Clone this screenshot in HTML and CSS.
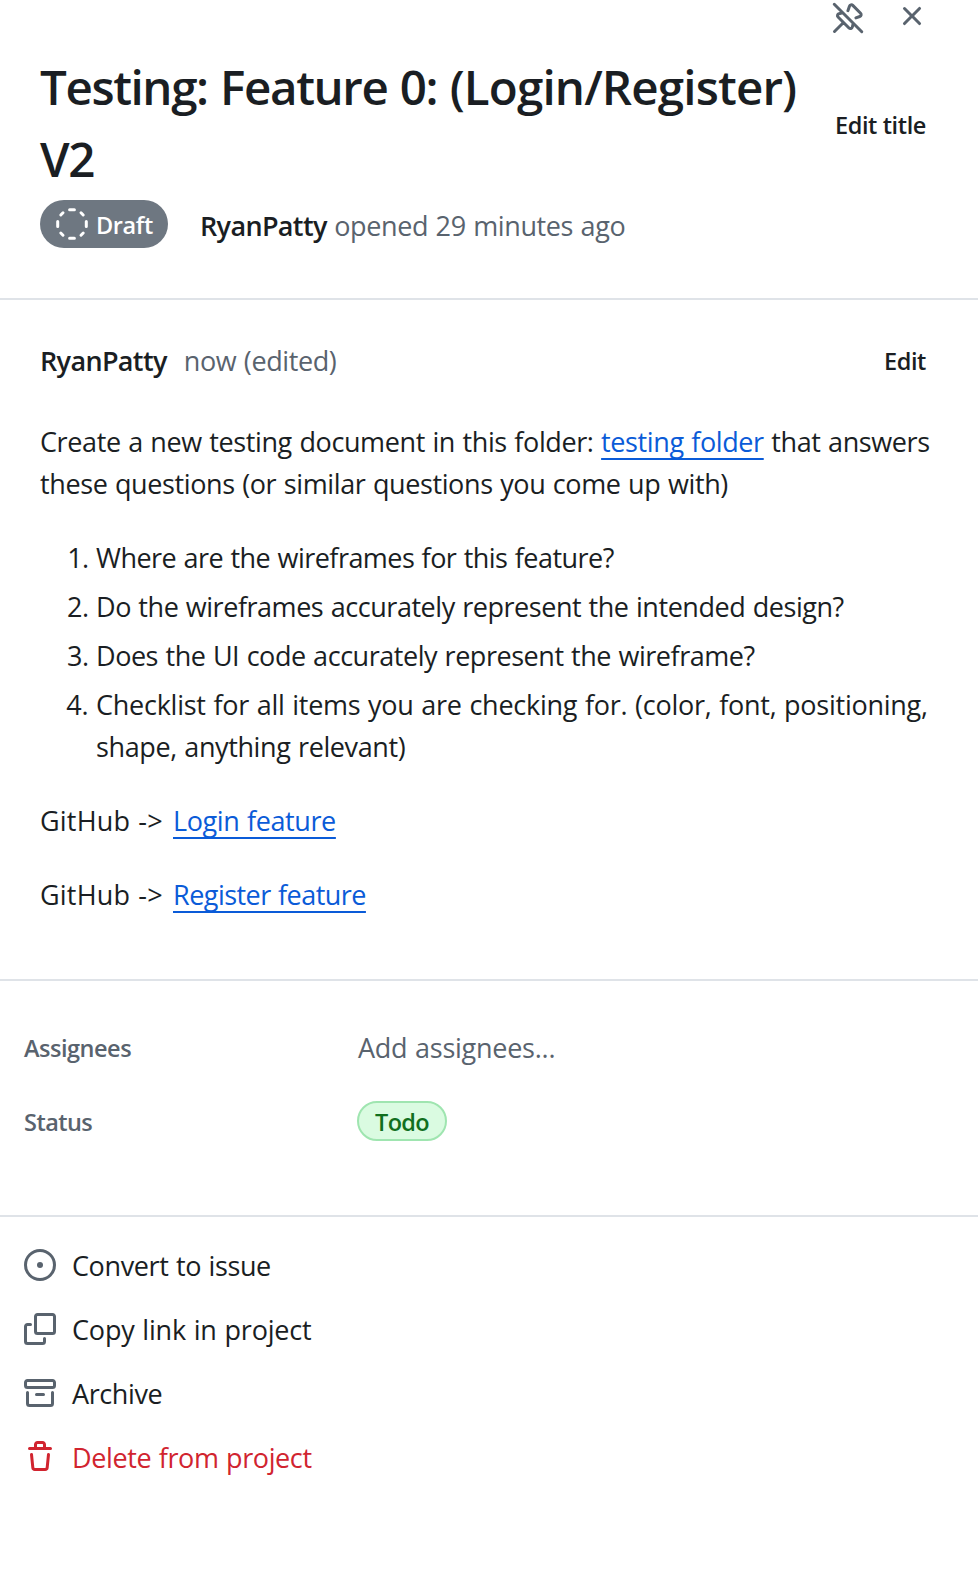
FILE: index.html
```
<!DOCTYPE html>
<html lang="en">
<head>
<meta charset="utf-8">
<title>Testing: Feature 0: (Login/Register) V2</title>
<link rel="stylesheet" href="styles.css">
</head>
<body>
<main class="panel">
  <header class="header">
    <div class="toolbar">
      <button class="icon-button" aria-label="Unpin"><svg class="icon" viewBox="0 0 16 16" fill="none" stroke="currentColor" stroke-width="1.5" stroke-linecap="round" stroke-linejoin="round"><path d="M1.13 1.13 14.88 14.88M1.25 14.75l4.5-4.5M5.25 5.42l-1.76.42A1 1 0 0 0 3.02 7.52l5.47 5.47a1 1 0 0 0 1.68-.48l.36-1.51M7.95 4.35l.78-2.26a1 1 0 0 1 1.66-.39l3.9 3.9a1 1 0 0 1-.4 1.66l-1.95.67"/></svg></button>
      <button class="icon-button icon-button-close" aria-label="Close"><svg class="icon" viewBox="0 0 16 16"><path d="M3.72 3.72a.75.75 0 0 1 1.06 0L8 6.94l3.22-3.22a.75.75 0 1 1 1.06 1.06L9.06 8l3.22 3.22a.75.75 0 1 1-1.06 1.06L8 9.06l-3.22 3.22a.75.75 0 1 1-1.06-1.06L6.94 8 3.72 4.78a.75.75 0 0 1 0-1.06Z"/></svg></button>
    </div>
    <div class="title-row">
      <h1 class="title">Testing: Feature 0: <span class="title-scope">(Login/Register)</span> V2</h1>
      <button class="text-button edit-title">Edit title</button>
    </div>
    <div class="meta">
      <span class="draft"><svg class="icon" viewBox="0 0 16 16" fill="none" stroke="currentColor" stroke-width="1.5" stroke-linecap="round"><path d="M6.8 .85h2.4M12.5 2.4l1.1 1.1M15.15 6.8v2.4M13.6 12.5l-1.1 1.1M9.2 15.15H6.8M3.5 13.6l-1.1-1.1M.85 9.2V6.8M2.4 3.5l1.1-1.1"/></svg><span class="draft-text">Draft</span></span>
      <span class="opened"><strong class="author">RyanPatty</strong> <span class="opened-text">opened 29 minutes ago</span></span>
    </div>
  </header>
  <section class="comment">
    <div class="comment-head">
      <strong class="author">RyanPatty</strong>
      <span class="time">now (edited)</span>
      <button class="text-button edit">Edit</button>
    </div>
    <div class="markdown">
      <p>Create a new testing document in this folder: <a class="link" href="#">testing folder</a> that answers<br>these questions (or similar questions you come up with)</p>
      <ol class="questions">
        <li class="tighter">Where are the wireframes for this feature?</li>
        <li class="tight">Do the wireframes accurately represent the intended design?</li>
        <li class="tight">Does the UI code accurately represent the wireframe?</li>
        <li class="loose">Checklist for all items you are checking for. (color, font, positioning,<br><span class="base">shape, anything relevant)</span></li>
      </ol>
      <p><span class="source">GitHub -&gt; </span><a class="link" href="#">Login feature</a></p>
      <p><span class="source">GitHub -&gt; </span><a class="link tighter" href="#">Register feature</a></p>
    </div>
  </section>
  <section class="fields">
    <div class="field"><span class="label">Assignees</span><span class="placeholder">Add assignees...</span></div>
    <div class="field"><span class="label tighter">Status</span><span class="status">Todo</span></div>
  </section>
  <nav class="actions">
    <a class="action"><svg class="icon" viewBox="0 0 16 16"><path d="M8 9.5a1.5 1.5 0 1 0 0-3 1.5 1.5 0 0 0 0 3Z"/><path d="M8 0a8 8 0 1 1 0 16A8 8 0 0 1 8 0ZM1.5 8a6.5 6.5 0 1 0 13 0 6.5 6.5 0 0 0-13 0Z"/></svg><span>Convert to issue</span></a>
    <a class="action"><svg class="icon" viewBox="0 0 16 16"><path d="M0 6.75C0 5.784.784 5 1.75 5h1.5a.75.75 0 0 1 0 1.5h-1.5a.25.25 0 0 0-.25.25v7.5c0 .138.112.25.25.25h7.5a.25.25 0 0 0 .25-.25v-1.5a.75.75 0 0 1 1.5 0v1.5A1.75 1.75 0 0 1 9.25 16h-7.5A1.75 1.75 0 0 1 0 14.25Z"/><path d="M5 1.75C5 .784 5.784 0 6.75 0h7.5C15.216 0 16 .784 16 1.75v7.5A1.75 1.75 0 0 1 14.25 11h-7.5A1.75 1.75 0 0 1 5 9.25Zm1.75-.25a.25.25 0 0 0-.25.25v7.5c0 .138.112.25.25.25h7.5a.25.25 0 0 0 .25-.25v-7.5a.25.25 0 0 0-.25-.25Z"/></svg><span class="loose">Copy link in project</span></a>
    <a class="action"><svg class="icon" viewBox="0 0 16 16"><path d="M0 2.75C0 1.784.784 1 1.75 1h12.5c.966 0 1.75.784 1.75 1.75v1.5A1.75 1.75 0 0 1 14.25 6H1.75A1.75 1.75 0 0 1 0 4.25ZM1.75 7a.75.75 0 0 1 .75.75v5.5c0 .138.112.25.25.25h10.5a.25.25 0 0 0 .25-.25v-5.5a.75.75 0 0 1 1.5 0v5.5A1.75 1.75 0 0 1 13.25 15H2.75A1.75 1.75 0 0 1 1 13.25v-5.5A.75.75 0 0 1 1.75 7Zm0-4.5a.25.25 0 0 0-.25.25v1.5c0 .138.112.25.25.25h12.5a.25.25 0 0 0 .25-.25v-1.5a.25.25 0 0 0-.25-.25ZM6.25 8h3.5a.75.75 0 0 1 0 1.5h-3.5a.75.75 0 0 1 0-1.5Z"/></svg><span>Archive</span></a>
    <a class="action action-danger"><svg class="icon" viewBox="0 0 16 16"><path d="M11 1.75V3h2.25a.75.75 0 0 1 0 1.5H2.75a.75.75 0 0 1 0-1.5H5V1.75C5 .784 5.784 0 6.75 0h2.5C10.216 0 11 .784 11 1.75ZM4.496 6.675l.66 6.6a.25.25 0 0 0 .249.225h5.19a.25.25 0 0 0 .249-.225l.66-6.6a.75.75 0 0 1 1.492.149l-.66 6.6A1.748 1.748 0 0 1 10.595 15h-5.19a1.75 1.75 0 0 1-1.741-1.575l-.66-6.6a.75.75 0 1 1 1.492-.15ZM6.5 1.75V3h3V1.75a.25.25 0 0 0-.25-.25h-2.5a.25.25 0 0 0-.25.25Z"/></svg><span>Delete from project</span></a>
  </nav>
</main>
</body>
</html>
```
FILE: styles.css
```
* { box-sizing: border-box; }
body {
  margin: 0;
  background: #fff;
  color: #1a1e23;
  font: 27px/42px "Open Sans", "Noto Sans", sans-serif;
  letter-spacing: -0.39px;
  word-spacing: 0.9px;
}
.panel { height: 1582px; overflow: hidden; }
.icon { width: 32px; height: 32px; display: block; flex: none; fill: currentColor; }
.icon[stroke] { fill: none; }
button { border: 0; background: none; padding: 0; font: inherit; color: inherit; letter-spacing: inherit; }
.base { letter-spacing: -0.39px; }
.tight { letter-spacing: -0.46px; }
.tighter { letter-spacing: -0.54px; }
.loose { letter-spacing: -0.25px; }

.header { height: 300px; border-bottom: 2px solid #dfe3e8; }
.toolbar { height: 51px; display: flex; justify-content: flex-end; gap: 32px; padding-right: 50px; color: #59636e; }
.icon-button { height: 32px; margin-top: 2px; }
.icon-button-close { margin-top: 0; }
.title-row { display: flex; justify-content: space-between; padding: 0 52px 0 40px; height: 149px; }
.title { margin: 0; width: 770px; font-size: 47.5px; line-height: 72px; font-weight: 600; letter-spacing: -1.4px; word-spacing: 1.5px; }
.title-scope { letter-spacing: -0.85px; }
.text-button { font-size: 23.5px; line-height: 36px; font-weight: 600; white-space: nowrap; }
.edit-title { height: 36px; margin-top: 56px; }
.meta { display: flex; align-items: center; height: 48px; padding-left: 40px; gap: 32px; }
.draft { display: flex; align-items: center; width: 128px; height: 48px; border-radius: 24px; padding-left: 16px; gap: 8px; background: #6e7781; color: #fff; font-size: 23.5px; font-weight: 600; }
.draft-text { padding-top: 2px; }
.opened { padding-top: 4px; }
.opened, .time { color: #59636e; white-space: nowrap; }
.author { font-weight: 600; color: #1a1e23; letter-spacing: -0.65px; }

.comment { height: 681px; padding: 40px 0 0 40px; border-bottom: 2px solid #dfe3e8; }
.comment-head { display: flex; align-items: center; height: 42px; padding-right: 52px; }
.time { margin-left: 17px; }
.edit { margin-left: auto; }
.markdown { margin-top: 39px; white-space: nowrap; }
.markdown p { margin: 0 0 32px; }
.questions { margin: 0 0 32px; padding-left: 56px; }
.questions li + li { margin-top: 7px; }
.link { color: #0a5bd8; text-decoration: underline; text-decoration-thickness: 2px; text-underline-offset: 6px; }
.source { letter-spacing: 0.2px; margin-right: 2px; }

.fields { height: 236px; padding: 29px 24px 0; border-bottom: 2px solid #dfe3e8; }
.field { display: grid; grid-template-columns: 333px auto; align-items: center; justify-content: start; height: 74px; color: #59636e; }
.label { font-size: 23.5px; font-weight: 600; padding-top: 2px; }
.placeholder { padding: 2px 0 0 1px; letter-spacing: -0.25px; }
.label:not(.tighter) { letter-spacing: -0.48px; }
.status { justify-self: start; height: 40px; width: 90px; border: 2px solid #9fe5b0; border-radius: 20px; background: #dafbe1; color: #116f1e; font-size: 23.5px; line-height: 38px; font-weight: 600; text-align: center; letter-spacing: -0.7px; }

.actions { padding: 16px 24px 0; }
.action { display: flex; align-items: center; gap: 16px; height: 64px; }
.action span { padding-top: 2px; }
.action .loose { letter-spacing: -0.18px; }
.action .icon { color: #59636e; }
.action-danger, .action-danger .icon { color: #d1242f; }
```
